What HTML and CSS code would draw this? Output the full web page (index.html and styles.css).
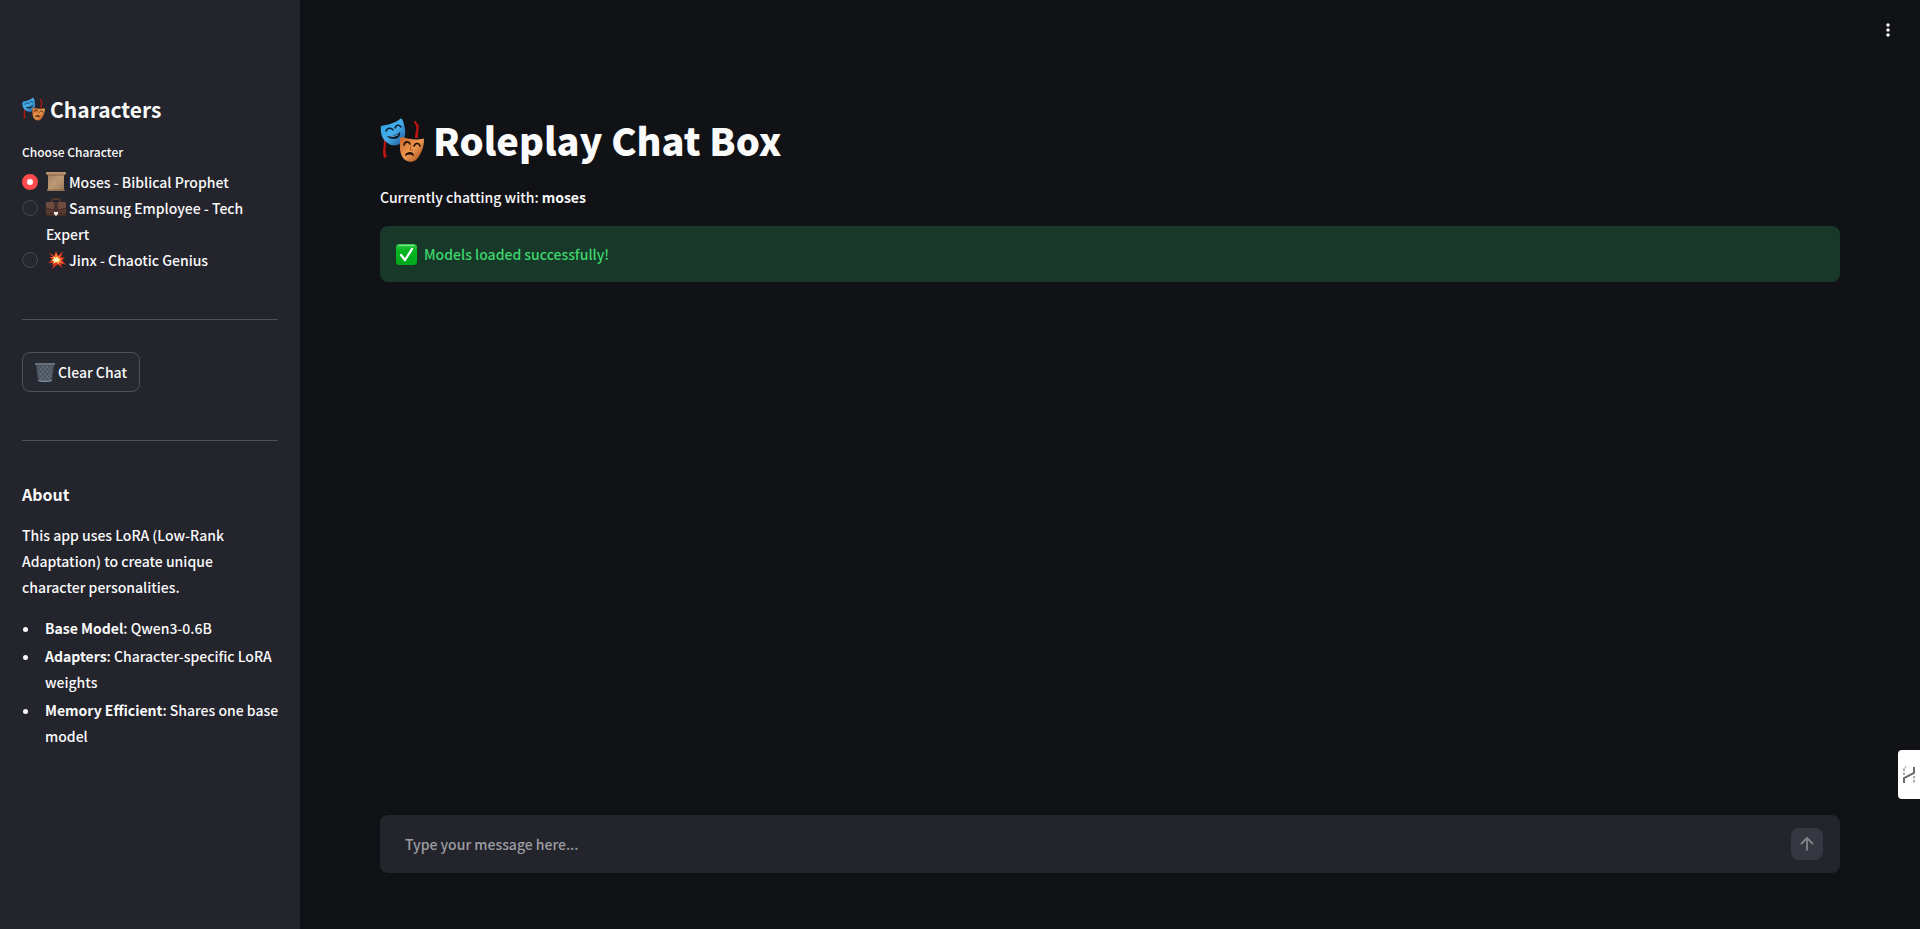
FILE: index.html
```
<!DOCTYPE html>
<html lang="en">
<head>
    <meta charset="UTF-8">
    <meta name="viewport" content="width=device-width, initial-scale=1.0">
    <title>Roleplay Chat Box</title>
    <link rel="stylesheet" href="styles.css">
</head>
<body>
    <!-- Shared artwork -->
    <svg class="defs" aria-hidden="true">
        <defs>
            <linearGradient id="blue" x1="0" y1="0" x2="1" y2="1">
                <stop offset="0" stop-color="#2e9fe0"/>
                <stop offset="0.5" stop-color="#45aeea"/>
                <stop offset="1" stop-color="#1c5390"/>
            </linearGradient>
            <linearGradient id="orange" x1="0" y1="0" x2="1" y2="1">
                <stop offset="0" stop-color="#c9652a"/>
                <stop offset="0.5" stop-color="#ee9a50"/>
                <stop offset="1" stop-color="#98401a"/>
            </linearGradient>
            <linearGradient id="paper" x1="0" y1="0" x2="1" y2="1">
                <stop offset="0" stop-color="#a07c5c"/>
                <stop offset="0.5" stop-color="#bd9a76"/>
                <stop offset="1" stop-color="#987656"/>
            </linearGradient>
            <linearGradient id="leather" x1="0" y1="0" x2="0" y2="1">
                <stop offset="0" stop-color="#7a5546"/>
                <stop offset="1" stop-color="#452c24"/>
            </linearGradient>
            <linearGradient id="green" x1="0" y1="0" x2="0" y2="1">
                <stop offset="0" stop-color="#35cf4c"/>
                <stop offset="0.3" stop-color="#06b51f"/>
                <stop offset="1" stop-color="#00a81c"/>
            </linearGradient>
            <symbol id="masks" viewBox="0 0 44 44">
                <path d="M3 18C6 25 1 32 4 40l3-1C4 32 7 26 6 19z" fill="#b8140f"/>
                <path d="M34 3l2 0c0 2 3 3 3 6-1 4-1 8-1 11h-3c0-5 2-9 1-12-1-2-2-3-2-5z" fill="#b8140f"/>
                <path d="M1 8C7 7 15 5 20 1c2-1 2 0 3 2 2 7 4 14 0 20-3 4-9 6-14 3C2 22 0 15 1 8z" fill="url(#blue)"/>
                <path d="M6 13c1-3 5-4 7-1M15 10c1-3 4-4 6-1" fill="none" stroke="#0b1c2c" stroke-width="1.5" stroke-linecap="round"/>
                <path d="M7 18c5 1 10-1 13-4 1 4-2 7-6 7-3 0-6-1-7-3z" fill="#0b1c2c"/>
                <path d="M9 18c4 1 8-1 10-2-1 2-7 4-10 2z" fill="#8ccdf2"/>
                <path d="M22 19c6 2 14 3 20 2 1-1 2 0 2 1 0 7-3 15-8 20-4 3-9 2-12-1-5-5-4-14-4-20 0-1 1-2 2-2z" fill="url(#orange)"/>
                <path d="M24 27c1-4 5-4 6-1M34 28c2-4 5-3 6 0" fill="none" stroke="#2a1208" stroke-width="1.7" stroke-linecap="round"/>
                <path d="M31 28l-1 4 3 0" fill="none" stroke="#b8541f" stroke-width="1"/>
                <path d="M25 38c0-3 3-4 5-4 2 0 4 1 4 4-3-2-6-2-9 0z" fill="#2a1208"/>
            </symbol>
        </defs>
    </svg>

    <div class="app">
        <aside class="sidebar">
            <h2 class="sidebar-title"><svg class="title-icon" aria-hidden="true"><use href="#masks"/></svg>Characters</h2>

            <fieldset class="characters">
                <legend>Choose Character</legend>
                <label class="option">
                    <input type="radio" name="character" value="moses" checked>
                    <span><svg class="emoji" viewBox="0 0 20 20" aria-hidden="true">
                        <path d="M1 1h18l-1 3v13l1 2H1l1-3V4z" fill="url(#paper)"/>
                        <path d="M0 0h20v2l-2 1H2L0 2z" fill="#b8926c"/>
                        <path d="M2 3h16M1 18h17" stroke="#80583a" stroke-width="0.8"/>
                        <path d="M5 6l4 1M10 10l5-1M6 14l4 1" stroke="#b08a66" stroke-width="0.7"/>
                    </svg>Moses - Biblical Prophet</span>
                </label>
                <label class="option">
                    <input type="radio" name="character" value="samsung">
                    <span><svg class="emoji" viewBox="0 0 20 20" aria-hidden="true">
                        <path d="M6 5V2q0-1 1-1h6q1 0 1 1v3" fill="none" stroke="#5d3d31" stroke-width="1.3"/>
                        <rect x="0" y="4" width="20" height="14" rx="1.5" fill="url(#leather)"/>
                        <path d="M0 6q0-2 2-2h16q2 0 2 2v4q-10 4-20 0z" fill="#6f4c3f"/>
                        <path d="M0 10q10 4 20 0" fill="none" stroke="#372119" stroke-width="0.8"/>
                        <path d="M8 4h4v9H8z" fill="#49302a"/>
                        <path d="M8 14h4v2l-2 2-2-2z" fill="#f0f2f4"/>
                    </svg>Samsung Employee - Tech Expert</span>
                </label>
                <label class="option">
                    <input type="radio" name="character" value="jinx">
                    <span><svg class="emoji" viewBox="0 0 20 20" aria-hidden="true">
                        <path d="M2 2l6 4 2-5 2 5 5-5-2 6 4 1-3 2 4 5-5-2 1 5-4-4-6 5 2-6-6 0 5-3-4-3 4 0z" fill="#e0321c"/>
                        <path d="M4 4l5 3 1-4 2 4 3-3-2 4 4 1-3 1 3 4-4-2 0 3-3-3-4 3 2-4-4 0 4-2-3-2 3 0z" fill="#ff9140"/>
                        <path d="M8 7l2 1 2-1 0 2 2 0-1 2-1 1-2 0-2 1 0-2-2-1 2-1z" fill="#fff0b8"/>
                    </svg>Jinx - Chaotic Genius</span>
                </label>
            </fieldset>

            <hr>

            <button type="button" class="clear-button"><svg class="emoji" viewBox="0 0 20 20" aria-hidden="true">
                <path d="M1 2h18l-2 17q-7 2-14 0z" fill="#4b545e"/>
                <path d="M3 4l12 14M7 4l9 10M11 4l6 6M3 9l8 10M4 14l4 5M17 4L5 18M13 4L4 14M9 4L3 10M17 9l-8 10M16 14l-4 5" stroke="#727c87" stroke-width="0.6"/>
                <path d="M0 1h20v2H0z" fill="#66707a"/>
                <path d="M3 18q7 2 14 0l0 1q-7 2-14 0z" fill="#8798a8"/>
            </svg>Clear Chat</button>

            <hr>

            <h3 class="about-title">About</h3>
            <p class="about-text">This app uses LoRA (Low-Rank Adaptation) to create unique character personalities.</p>
            <ul class="about-list">
                <li><strong>Base Model</strong>: Qwen3-0.6B</li>
                <li><strong>Adapters</strong>: Character-specific LoRA weights</li>
                <li><strong>Memory Efficient</strong>: Shares one base model</li>
            </ul>
        </aside>

        <main class="main">
            <header class="toolbar">
                <button type="button" class="menu-button" aria-label="Main menu">
                    <svg viewBox="0 0 16 16" aria-hidden="true">
                        <circle cx="8" cy="3" r="1.7"/>
                        <circle cx="8" cy="8" r="1.7"/>
                        <circle cx="8" cy="13" r="1.7"/>
                    </svg>
                </button>
            </header>

            <div class="content">
                <h1><svg class="page-icon" aria-hidden="true"><use href="#masks"/></svg>Roleplay Chat Box</h1>
                <p class="status">Currently chatting with: <strong>moses</strong></p>
                <div class="alert" role="status">
                    <svg class="check" viewBox="0 0 21 21" aria-hidden="true">
                        <rect width="21" height="21" rx="3.5" fill="url(#green)"/>
                        <path d="M3 1.5h15" stroke="#7be58a" stroke-width="1" stroke-linecap="round"/>
                        <path d="M5 11l4 5L16 5" fill="none" stroke="#fff" stroke-width="2.3" stroke-linecap="round" stroke-linejoin="round"/>
                    </svg>
                    <span>Models loaded successfully!</span>
                </div>
            </div>

            <form class="chat-form">
                <input type="text" placeholder="Type your message here..." aria-label="Message">
                <button type="button" class="send-button" aria-label="Send message">
                    <svg viewBox="0 0 16 16" aria-hidden="true">
                        <path d="M8 14.5V2M2 8l6-6 6 6" fill="none" stroke="currentColor" stroke-width="1.8"/>
                    </svg>
                </button>
            </form>
        </main>
    </div>

    <button type="button" class="side-tab" aria-label="Open panel">
        <svg viewBox="0 0 12 18" aria-hidden="true">
            <path d="M1 17v-5l10-5V1" fill="none" stroke="#6a6a6a" stroke-width="2"/>
            <path d="M1 9V2l2-1M11 10v6l-2 1" fill="none" stroke="#a8a8a8" stroke-width="2" stroke-dasharray="2.5 1.5"/>
        </svg>
    </button>
</body>
</html>
```
FILE: styles.css
```
* {
    box-sizing: border-box;
}
body {
    margin: 0;
    background: #111216;
    color: #fafafa;
    font-family: "Noto Sans CJK SC", sans-serif;
    font-size: 14px;
    font-weight: 500;
    line-height: 26px;
}
h1, h2, h3, p, ul {
    margin: 0;
}
button, input {
    font: inherit;
    color: inherit;
}
button {
    cursor: pointer;
}
strong {
    font-weight: 700;
}
.defs {
    position: absolute;
    width: 0;
    height: 0;
}
.app {
    display: flex;
    min-height: 100vh;
}

/* Sidebar */
.sidebar {
    flex: 0 0 300px;
    padding: 95px 22px 24px;
    background: #23242c;
}
.sidebar-title {
    display: flex;
    align-items: center;
    gap: 5px;
    font-size: 21px;
    font-weight: 700;
    line-height: 28px;
}
.title-icon {
    width: 23px;
    height: 24px;
}
.characters {
    margin: 17px 0 0;
    padding: 0;
    border: 0;
}
.characters legend {
    padding: 0 0 5px;
    font-size: 12px;
    line-height: 24px;
}
.option {
    display: flex;
    gap: 8px;
    cursor: pointer;
}
.option input {
    appearance: none;
    flex: none;
    width: 16px;
    height: 16px;
    margin: 5px 0 0;
    border: 1px solid #46484c;
    border-radius: 50%;
    background: #25282f;
}
.option input:checked {
    border: 5px solid #ff4b4b;
    background: #fafafa;
}
.emoji {
    width: 20px;
    height: 20px;
    margin-right: 3px;
    vertical-align: -4px;
}
.sidebar hr {
    height: 1px;
    margin: 46px 0 32px;
    border: 0;
    background: #505154;
}
.clear-button {
    display: flex;
    align-items: center;
    height: 40px;
    margin-bottom: 48px;
    padding: 0 12px;
    border: 1px solid #505257;
    border-radius: 8px;
    background: #262930;
}
.about-title {
    margin-top: 39px;
    font-size: 16px;
    font-weight: 700;
    line-height: 28px;
}
.about-text {
    margin: 14px 0 15px;
}
.about-list {
    margin-right: -4px;
    padding-left: 23px;
    list-style: none;
}
.about-list li + li {
    margin-top: 2px;
}
.about-list li::before {
    content: "";
    display: inline-block;
    width: 5px;
    height: 5px;
    margin: 0 17px 0 -22px;
    border-radius: 50%;
    background: #fafafa;
    vertical-align: 2px;
}

/* Main area */
.main {
    flex: 1;
    display: flex;
    flex-direction: column;
    padding: 0 80px 56px;
}
.toolbar {
    display: flex;
    justify-content: flex-end;
    align-items: center;
    height: 60px;
    margin-right: -60px;
}
.menu-button {
    display: flex;
    padding: 4px;
    border: 0;
    background: none;
}
.menu-button svg {
    width: 16px;
    height: 16px;
    fill: #fafafa;
}
.content {
    flex: 1;
    padding-top: 53px;
}
h1 {
    display: flex;
    align-items: center;
    gap: 9px;
    font-size: 38px;
    font-weight: 900;
    line-height: 54px;
}
.page-icon {
    width: 44px;
    height: 44px;
}
.status {
    margin: 17px 0 16px;
}
.alert {
    display: flex;
    align-items: center;
    gap: 7px;
    padding: 15px 16px;
    border-radius: 8px;
    background: #183829;
    color: #3dd56d;
}
.check {
    width: 21px;
    height: 21px;
}
.chat-form {
    display: flex;
    align-items: center;
    padding: 13px 17px 13px 25px;
    border-radius: 8px;
    background: #23242c;
}
.chat-form input {
    flex: 1;
    height: 32px;
    padding: 0;
    border: 0;
    outline: 0;
    background: none;
}
.chat-form input::placeholder {
    color: #9c9da0;
    opacity: 1;
}
.send-button {
    display: flex;
    align-items: center;
    justify-content: center;
    width: 32px;
    height: 32px;
    padding: 0;
    border: 0;
    border-radius: 8px;
    background: #353840;
    color: #84868a;
}
.send-button svg {
    width: 16px;
    height: 16px;
}

/* Floating tab over the right edge */
.side-tab {
    position: fixed;
    right: 0;
    bottom: 130px;
    display: flex;
    align-items: center;
    justify-content: center;
    width: 22px;
    height: 49px;
    padding: 0;
    border: 0;
    border-radius: 4px 0 0 4px;
    background: #fff;
}
.side-tab svg {
    width: 12px;
    height: 18px;
}
```
